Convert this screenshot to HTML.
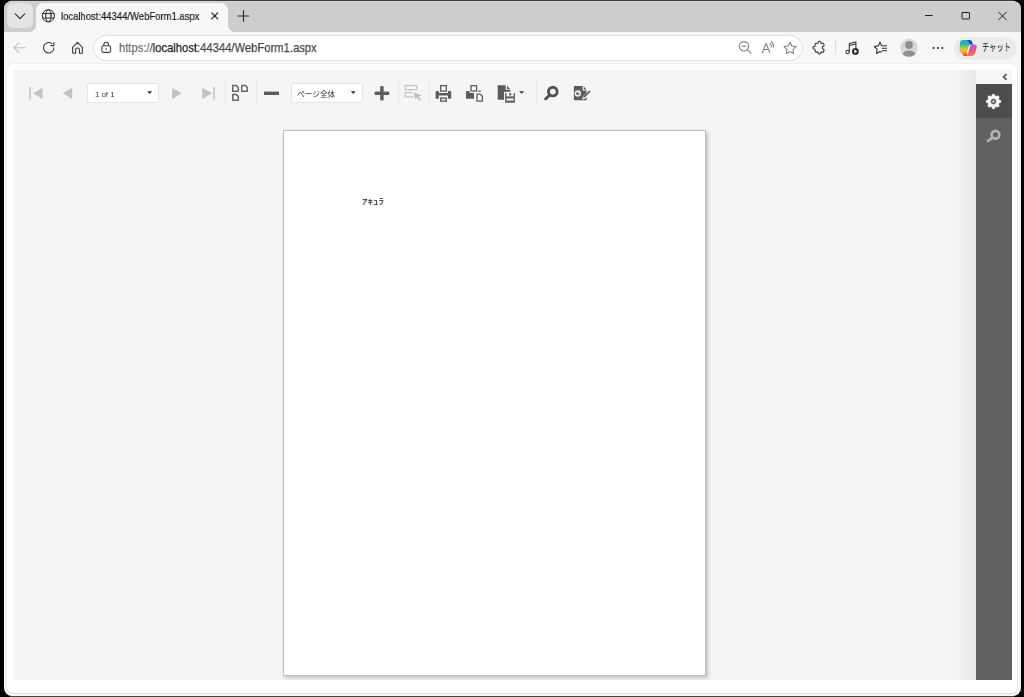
<!DOCTYPE html>
<html lang="ja">
<head>
<meta charset="utf-8">
<title>localhost:44344/WebForm1.aspx</title>
<style>
*{box-sizing:border-box;margin:0;padding:0}
html,body{width:1024px;height:697px;overflow:hidden;background:#000}
body{position:relative;font-family:"Liberation Sans","Noto Sans CJK JP",sans-serif;color:#1b1b1b}
.abs{position:absolute}
#win{position:absolute;left:4px;top:1px;width:1017px;height:695px;background:#f7f7f7;border-radius:8px;overflow:hidden}
#strip{position:absolute;left:0;top:0;width:1017px;height:31px;background:#cdcdcd}
#tabbtn{position:absolute;left:3px;top:2px;width:26px;height:25px;border-radius:6px;background:#e4e4e4}
#tab{position:absolute;left:32px;top:2px;width:192px;height:30px;background:#f7f7f7;border-radius:7px 7px 0 0}
#tab:before,#tab:after{content:"";position:absolute;bottom:1px;width:6px;height:6px;background:radial-gradient(circle at 0 0,rgba(247,247,247,0) 5.5px,#f7f7f7 6px)}
#tab:before{left:-6px}
#tab:after{right:-6px;background:radial-gradient(circle at 100% 0,rgba(247,247,247,0) 5.5px,#f7f7f7 6px)}
#tabtitle{will-change:transform;position:absolute;left:57px;top:8px;font-size:11px;line-height:14px;color:#1a1a1a;-webkit-text-stroke:0.2px #1a1a1a;white-space:nowrap;transform-origin:0 50%;transform:scaleX(.862)}
#addr{position:absolute;left:89px;top:34px;width:710px;height:26px;border-radius:13px;background:#fff;border:1px solid #dcdcdc}
#url{will-change:transform;position:absolute;left:114.8px;top:39.4px;font-size:13px;line-height:16px;color:#454545;-webkit-text-stroke:0.25px #454545;white-space:nowrap;transform-origin:0 50%;transform:scaleX(.864)}
#url b{font-weight:normal;color:#1c1c1c;-webkit-text-stroke:0.25px #1c1c1c}
#url i{font-style:normal;color:#666;-webkit-text-stroke:0.2px #666}
#cop{position:absolute;left:950.3px;top:35.5px;width:62.4px;height:23.4px;border-radius:11.5px;background:#ebebeb}
#coptxt{will-change:transform;position:absolute;left:978.2px;top:38.8px;font-size:10.4px;line-height:16px;color:#3a3a3a;font-weight:500;white-space:nowrap;transform-origin:0 50%;transform:scaleX(.70);font-family:"Liberation Sans","Noto Sans CJK JP",sans-serif}
#content{position:absolute;left:2px;top:62px;width:1012px;height:631px;background:#fff;border-radius:6px;border:1px solid #eeeeee;border-bottom-color:#dedede}
#viewer{position:absolute;left:9px;top:69px;width:999px;height:610px;background:#f5f5f5;overflow:hidden}
#shadow{position:absolute;left:938px;top:0;width:25px;height:610px;background:linear-gradient(to right,rgba(0,0,0,0),rgba(0,0,0,0.015) 40%,rgba(0,0,0,0.055))}
#side{position:absolute;left:963px;top:14px;width:36px;height:596px;background:#606060}
#sidetop{position:absolute;left:963px;top:0;width:36px;height:14px;background:#f6f6f6}
#gearbox{position:absolute;left:0;top:0;width:36px;height:33.8px;background:#4d4d4d}
#page{position:absolute;left:270px;top:60px;width:423px;height:546px;background:#fff;border:1px solid #bdbdbd;box-shadow:1.5px 1.5px 4px rgba(0,0,0,0.22)}
#ptext{will-change:transform;position:absolute;left:77.7px;top:66.4px;font-size:6.7px;line-height:10px;font-weight:bold;color:#111;white-space:nowrap;transform-origin:0 50%;transform:scaleX(.82);font-family:"Liberation Sans","Noto Sans CJK JP",sans-serif}
.sep{position:absolute;top:10px;width:1px;height:25px;background:#e6e6e6}
.combo{position:absolute;top:13px;height:20px;background:#fff;border:1px solid #e4e4e4;border-radius:2px;font-size:7.8px;line-height:18px;color:#3c3c3c;white-space:nowrap}
.combo span{position:absolute;top:1.4px;will-change:transform}
.caret{position:absolute;width:0;height:0;border-left:2.6px solid transparent;border-right:2.6px solid transparent;border-top:2.8px solid #333}
svg{position:absolute;overflow:visible}
</style>
</head>
<body>
<div class="abs" style="left:10px;top:0;width:1004px;height:1px;background:#3a3a3a"></div>
<div class="abs" style="left:10px;top:696px;width:1004px;height:1px;background:#444"></div>
<div id="win">
  <div id="strip"></div>
  <div class="abs" style="left:6px;top:0;width:1005px;height:1px;background:#d8d8d8"></div>
  <div id="tabbtn"></div>
  <div id="tab"></div>
  <div id="tabtitle">localhost:44344/WebForm1.aspx</div>
  <div id="addr"></div>
  <div id="url"><i>https://</i><b>localhost</b>:44344/WebForm1.aspx</div>

  <svg id="chrome" style="left:-4px;top:-1px" width="1024" height="697" viewBox="0 0 1024 697" fill="none" stroke-linecap="round" stroke-linejoin="round">
    <!-- tab strip -->
    <path d="M15.3 13.8 L20 18.6 L24.7 13.8" stroke="#333" stroke-width="1.2"/>
    <g stroke="#2e2e2e" stroke-width="1">
      <circle cx="48.4" cy="15.8" r="6.1"/>
      <ellipse cx="48.4" cy="15.8" rx="2.7" ry="6.1"/>
      <path d="M42.8 13.6 H54 M42.8 18 H54"/>
    </g>
    <path d="M211.7 12.9 L217.7 18.9 M217.7 12.9 L211.7 18.9" stroke="#222" stroke-width="1.2"/>
    <path d="M238.2 16 H248.8 M243.5 10.7 V21.3" stroke="#333" stroke-width="1.2"/>
    <!-- window controls -->
    <path d="M925 15.5 H932.8" stroke="#222" stroke-width="1" stroke-linecap="butt"/>
    <rect x="962" y="12.5" width="7.5" height="6.5" rx="0.4" stroke="#222" stroke-width="1"/>
    <path d="M998.7 12.3 L1006.4 19.7 M1006.4 12.3 L998.7 19.7" stroke="#222" stroke-width="1"/>
    <!-- nav -->
    <path d="M14 47.7 H26 M19 42.8 L14 47.7 L19 52.6" stroke="#c4c4c4" stroke-width="1.1"/>
    <path d="M53.9 47.9 A5.2 5.2 0 1 1 51.8 43.6 M53.9 42.6 V45.6 H50.9" stroke="#3a3a3a" stroke-width="1.1"/>
    <path d="M72.6 47.3 L77.5 42.4 L82.4 47.3 V52.4 Q82.4 53.2 81.6 53.2 H79.4 V49.6 Q79.4 48 77.5 48 Q75.6 48 75.6 49.6 V53.2 H73.4 Q72.6 53.2 72.6 52.4 Z" stroke="#3a3a3a" stroke-width="1.1"/>
    <!-- lock -->
    <rect x="101.8" y="45.8" width="8.8" height="6.6" rx="1.6" stroke="#444" stroke-width="1.1"/>
    <path d="M103.9 45.6 V44.6 A2.3 2.3 0 0 1 108.5 44.6 V45.6" stroke="#444" stroke-width="1.1"/>
    <circle cx="106.2" cy="49.1" r="0.8" fill="#444" stroke="none"/>
    <!-- addr right icons -->
    <g stroke="#7c7c7c" stroke-width="1.05">
      <circle cx="744" cy="46.3" r="4.7"/><path d="M747.5 49.8 L751 53.3 M741.8 46.3 H746.2"/>
      <path d="M762.4 52.6 L766.1 43.2 L769.8 52.6 M763.8 49.4 H768.4"/>
      <path d="M770 43.4 Q771.6 44.8 771.4 47 M771.6 41.6 Q774 43.8 773.6 47.2"/>
      <path d="M790 42.3 L791.85 46 L795.95 46.6 L793 49.5 L793.7 53.5 L790 51.6 L786.3 53.5 L787 49.5 L784.05 46.6 L788.15 46 Z"/>
    </g>
    <!-- extension puzzle -->
    <path d="M816.1 43.3 H818 Q817.8 41.2 819.5 41.2 Q821.2 41.2 821 43.3 H822.9 Q823.9 43.3 823.9 44.3 V46.2 Q822.3 46 822.3 47.7 Q822.3 49.4 823.9 49.2 V51.1 Q823.9 52.1 822.9 52.1 H821 Q821.2 53.9 819.5 53.9 Q817.8 53.9 818 52.1 H816.1 Q815.1 52.1 815.1 51.1 V49.2 Q813 49.4 813 47.7 Q813 46 815.1 46.2 V44.3 Q815.1 43.3 816.1 43.3 Z" stroke="#333" stroke-width="1.05"/>
    <path d="M835.5 40.6 V54" stroke="#dcdcdc" stroke-width="1"/>
    <!-- music -->
    <g stroke="#333" stroke-width="1.05">
      <path d="M849.3 51.6 V43.5 L855.9 41.9 V47.4 M849.3 45.6 L855.9 44"/>
      <circle cx="847.6" cy="52" r="1.7"/>
    </g>
    <circle cx="855.4" cy="51.4" r="3.4" fill="#2a2a2a" stroke="none"/>
    <path d="M854.3 49.6 L857.3 51.4 L854.3 53.2 Z" fill="#fff" stroke="none"/>
    <!-- fav list -->
    <g stroke="#333" stroke-width="1.1">
      <path d="M880 42.2 L878.3 45.9 L874.3 46.5 L877.2 49.3 L876.5 53.4 L880 51.5 L881.4 52.2"/>
      <path d="M880 42.2 L881.5 45.4"/>
      <path d="M882.4 45.7 H886.6 M882.2 48.2 H886.6 M882.2 50.7 H886.6"/>
    </g>
    <!-- profile -->
    <clipPath id="pc"><circle cx="909" cy="47.8" r="9"/></clipPath>
    <circle cx="909" cy="47.8" r="9" fill="#d8d8d8" stroke="none"/>
    <g clip-path="url(#pc)" fill="#8f8f8f" stroke="none">
      <circle cx="909" cy="45" r="3.9"/>
      <ellipse cx="909" cy="55.4" rx="6.5" ry="5"/>
    </g>
    <!-- dots -->
    <g fill="#2c2c2c" stroke="none"><circle cx="933.6" cy="48" r="1.05"/><circle cx="938" cy="48" r="1.05"/><circle cx="942.4" cy="48" r="1.05"/></g>
  </svg>
  <div id="cop"></div>
  <div id="coptxt">チャット</div>
  <svg style="left:-4px;top:-1px" width="1024" height="697" viewBox="0 0 1024 697">
    <defs>
      <linearGradient id="cg2" x1="0" y1="0" x2="0" y2="1"><stop offset="0" stop-color="#2a9fe4"/><stop offset=".3" stop-color="#30bf9a"/><stop offset=".55" stop-color="#c9cf3a"/><stop offset=".72" stop-color="#f6b52e"/><stop offset=".9" stop-color="#ee5a2c"/><stop offset="1" stop-color="#dc3a2a"/></linearGradient>
      <linearGradient id="cg3" x1="0" y1="0" x2="0" y2="1"><stop offset="0" stop-color="#b45ce0"/><stop offset=".5" stop-color="#e8508c"/><stop offset="1" stop-color="#f4763c"/></linearGradient>
    </defs>
    <path d="M962.6 39.4 H969.4 Q971.4 39.4 972.2 41.2 L973.4 44 H975 Q977.8 44 977.2 47 L975.8 52.6 Q975 56.4 971.6 56.4 H966 Q964.4 56.4 963.8 55 L963.2 53.6 L961 53 Q958.6 52.2 958.8 49.6 L959.5 42.2 Q960 39.4 962.6 39.4 Z" fill="#fff" opacity=".55"/>
    <path d="M962.6 40 Q960.4 40 960 42.2 L959.3 49.6 Q959.1 51.6 960.6 52.4 L962.2 53 Q962.6 55.9 965.2 56 H967 L968 49 L970 43.4 L971.6 41.2 Q970.8 39.9 969.4 39.9 Z" fill="url(#cg2)"/>
    <path d="M966.4 39.9 H969.8 Q971.4 39.9 972 41.4 L973.2 44.8 H969.8 L968.6 42 Q968 40.4 966.4 39.9 Z" fill="#1b55b8"/>
    <path d="M970.6 44.4 H974.6 Q977.3 44.4 976.8 47.2 L975.4 52.6 Q974.6 55.9 971.6 55.9 H966 Q967.6 55.4 968.2 53.4 L969.5 47 Q969.9 44.7 970.6 44.4 Z" fill="url(#cg3)"/>
    <path d="M969.9 45.4 L967.4 52.4" stroke="#fff" stroke-width="1" stroke-linecap="round" opacity=".9"/>
  </svg>
  <div id="content"></div>
  <div id="viewer">
    <div id="shadow"></div>
    <div id="sidetop"></div>
    <div id="side"><div id="gearbox"></div></div>
    <div id="page"><div id="ptext">アキュラ</div></div>

    <div class="combo" style="left:74px;width:72px"><span style="left:7px;top:2.2px">1 of 1</span></div>
    <div class="combo" style="left:278px;width:72px"><span style="left:5.3px;top:2px;font-size:7.7px">ページ全体</span></div>
    <svg id="vicons" style="left:-13px;top:-70px" width="1024" height="697" viewBox="0 0 1024 697" fill="none">
      <!-- first / prev / next / last (disabled) -->
      <g fill="#c3c3c3">
        <rect x="29.3" y="86.8" width="1.6" height="12.6"/>
        <path d="M33.2 93.3 L42.5 87.7 V98.9 Z"/>
        <path d="M62.6 93.3 L72.2 87.7 V98.9 Z"/>
        <path d="M181.6 93.3 L172.2 87.7 V98.9 Z"/>
        <path d="M212.2 93.3 L202.2 87.7 V98.9 Z"/>
        <rect x="213.3" y="86.8" width="1.6" height="12.6"/>
      </g>
      <path d="M147.2 91.2 H152.2 L149.7 93.9 Z M350.7 91.2 H355.7 L353.2 93.9 Z" fill="#333"/>
      <!-- multipage -->
      <g stroke="#666" stroke-width="1.5" stroke-linejoin="round" fill="#fbfbfb">
        <path d="M232.75 85.6 H236.4 L238.3 87.5 V91.2 H232.75 Z"/>
        <path d="M241.75 85.6 H245.4 L247.3 87.5 V91.2 H241.75 Z"/>
        <path d="M232.75 94.6 H236.4 L238.3 96.5 V100.2 H232.75 Z"/>
      </g>
      <!-- minus / plus -->
      <rect x="264" y="91.6" width="15" height="3.4" fill="#5c5c5c"/>
      <rect x="374.7" y="91.6" width="14.4" height="3.4" fill="#5c5c5c"/>
      <rect x="380.2" y="86.2" width="3.4" height="14.2" fill="#5c5c5c"/>
      <!-- highlight fields (disabled) -->
      <g stroke="#c6c6c6" stroke-width="1.3">
        <rect x="405.2" y="85.6" width="11.4" height="4.1"/>
        <path d="M412.6 92.6 H405.2 V96.8 H413.6"/>
      </g>
      <path d="M413.8 92.2 L421.6 95.6 L418.6 96.8 L421 99.8 L419.4 100.8 L417.2 97.6 L415.2 99.6 Z" fill="#bdbdbd"/>
      <!-- printer -->
      <path d="M436.4 90.9 H438.8 V92.9 H448 V90.9 H450.4 L451.2 91.7 V98.8 H448 V95.4 H438.8 V98.8 H435.6 V91.7 Z" fill="#5c5c5c"/>
      <rect x="440.65" y="85.65" width="5.7" height="5.4" stroke="#5c5c5c" stroke-width="1.3"/>
      <rect x="440.65" y="98.05" width="5.7" height="3.1" stroke="#5c5c5c" stroke-width="1.3" fill="#e9e9e9"/>
      <!-- print page -->
      <path d="M466.8 91 H469.6 V92.9 H474 V98.8 H466 V91.8 Z" fill="#5c5c5c"/>
      <path d="M478 90.6 H480.2 L481.2 91.8 H478 Z" fill="#5c5c5c"/>
      <rect x="471.05" y="85.65" width="5.5" height="5.4" stroke="#5c5c5c" stroke-width="1.3"/>
      <path d="M475.2 92.4 H481 L484 95.4 V102.8 H475.2 Z" fill="#f5f5f5"/>
      <path d="M476.95 94.15 H480.2 L482.35 96.3 V101.15 H476.95 Z" stroke="#5c5c5c" stroke-width="1.3" stroke-linejoin="round"/>
      <!-- export -->
      <path d="M497.7 85.2 H505.7 V89.8 H510.4 V99.7 H497.7 Z" fill="#5c5c5c"/>
      <path d="M507 85.7 L510.2 88.9 H507 Z" fill="#5c5c5c"/>
      <rect x="504" y="91.8" width="12" height="12" fill="#f5f5f5"/>
      <rect x="505.1" y="93" width="9.8" height="9.7" fill="#5c5c5c"/>
      <rect x="506.4" y="92.8" width="7.2" height="3.6" fill="#f5f5f5"/>
      <rect x="509.2" y="93.2" width="2.1" height="2.2" fill="#5c5c5c"/>
      <rect x="506.4" y="98.4" width="7.2" height="2.2" fill="#f5f5f5"/>
      <path d="M519.1 91.2 H524.1 L521.6 93.8 Z" fill="#333"/>
      <!-- search -->
      <circle cx="552.8" cy="91.6" r="4.35" stroke="#505050" stroke-width="2.8"/>
      <path d="M549.4 95.2 L545.6 99" stroke="#505050" stroke-width="2.8" stroke-linecap="round"/>
      <!-- edit fields -->
      <path d="M573.9 85.9 H582.6 V90.4 H586.6 V100.2 H573.9 Z" fill="#5c5c5c"/>
      <path d="M583.8 86.4 L586.6 89.4 H583.8 Z" fill="#5c5c5c"/>
      <circle cx="577.8" cy="93.4" r="2.4" stroke="#f5f5f5" stroke-width="1.5"/>
      <circle cx="578.4" cy="92.8" r="0.7" fill="#f5f5f5"/>
      <path d="M582.2 99.8 L582.9 96.6 L588.8 90.4 L590.8 92.2 L585.2 98.8 Z" fill="#f5f5f5"/>
      <path d="M584 96.8 L589.6 91.4" stroke="#5c5c5c" stroke-width="1.6" stroke-linecap="round"/>
      <!-- side panel -->
      <path d="M1006.5 74 L1003.6 76.8 L1006.5 79.6" stroke="#555" stroke-width="1.7"/>
      <path fill="#fff" fill-rule="evenodd" stroke="#fff" stroke-width="0.5" stroke-linejoin="round" d="M991.67 96.31 L992.55 94.26 L994.45 94.26 L995.33 96.31 L995.87 96.54 L997.95 95.71 L999.29 97.05 L998.46 99.13 L998.69 99.67 L1000.74 100.55 L1000.74 102.45 L998.69 103.33 L998.46 103.87 L999.29 105.95 L997.95 107.29 L995.87 106.46 L995.33 106.69 L994.45 108.74 L992.55 108.74 L991.67 106.69 L991.13 106.46 L989.05 107.29 L987.71 105.95 L988.54 103.87 L988.31 103.33 L986.26 102.45 L986.26 100.55 L988.31 99.67 L988.54 99.13 L987.71 97.05 L989.05 95.71 L991.13 96.54 Z M993.5 98.6 A2.9 2.9 0 1 0 993.5 104.4 A2.9 2.9 0 1 0 993.5 98.6 Z"/>
      <circle cx="993.5" cy="101.5" r="1.2" fill="#d8d8d8"/>
      <circle cx="995.5" cy="134.7" r="3.85" stroke="#b2b2b2" stroke-width="2.7"/>
      <path d="M992.4 137.6 L987.9 141" stroke="#b2b2b2" stroke-width="2.8" stroke-linecap="round"/>
    </svg>
    <div class="sep" style="left:212px"></div>
    <div class="sep" style="left:243px"></div>
    <div class="sep" style="left:385px"></div>
    <div class="sep" style="left:416px"></div>
    <div class="sep" style="left:523px"></div>
  </div>
</div>
</body>
</html>
